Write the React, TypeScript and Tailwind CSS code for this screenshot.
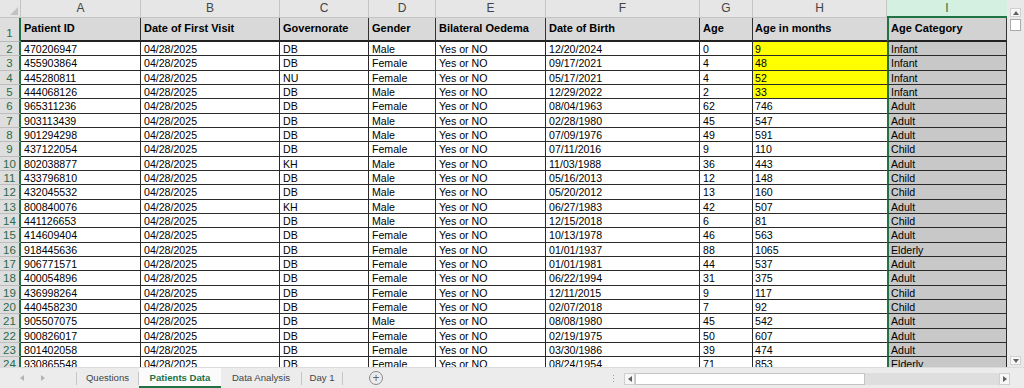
const COLS = ['A', 'B', 'C', 'D', 'E', 'F', 'G', 'H', 'I']
const HEAD = ['Patient ID', 'Date of First Visit', 'Governorate', 'Gender', 'Bilateral Oedema', 'Date of Birth', 'Age', 'Age in months', 'Age Category']

const DATA: string[][] = [
  ['470206947', 'DB', 'Male', '12/20/2024', '0', '9', 'Infant'],
  ['455903864', 'DB', 'Female', '09/17/2021', '4', '48', 'Infant'],
  ['445280811', 'NU', 'Female', '05/17/2021', '4', '52', 'Infant'],
  ['444068126', 'DB', 'Male', '12/29/2022', '2', '33', 'Infant'],
  ['965311236', 'DB', 'Female', '08/04/1963', '62', '746', 'Adult'],
  ['903113439', 'DB', 'Male', '02/28/1980', '45', '547', 'Adult'],
  ['901294298', 'DB', 'Male', '07/09/1976', '49', '591', 'Adult'],
  ['437122054', 'DB', 'Female', '07/11/2016', '9', '110', 'Child'],
  ['802038877', 'KH', 'Male', '11/03/1988', '36', '443', 'Adult'],
  ['433796810', 'DB', 'Male', '05/16/2013', '12', '148', 'Child'],
  ['432045532', 'DB', 'Male', '05/20/2012', '13', '160', 'Child'],
  ['800840076', 'KH', 'Male', '06/27/1983', '42', '507', 'Adult'],
  ['441126653', 'DB', 'Male', '12/15/2018', '6', '81', 'Child'],
  ['414609404', 'DB', 'Female', '10/13/1978', '46', '563', 'Adult'],
  ['918445636', 'DB', 'Female', '01/01/1937', '88', '1065', 'Elderly'],
  ['906771571', 'DB', 'Female', '01/01/1981', '44', '537', 'Adult'],
  ['400054896', 'DB', 'Female', '06/22/1994', '31', '375', 'Adult'],
  ['436998264', 'DB', 'Female', '12/11/2015', '9', '117', 'Child'],
  ['440458230', 'DB', 'Female', '02/07/2018', '7', '92', 'Child'],
  ['905507075', 'DB', 'Male', '08/08/1980', '45', '542', 'Adult'],
  ['900826017', 'DB', 'Female', '02/19/1975', '50', '607', 'Adult'],
  ['801402058', 'DB', 'Female', '03/30/1986', '39', '474', 'Adult'],
  ['930865548', 'DB', 'Female', '08/24/1954', '71', '853', 'Elderly'],
]

function Tri({ dir, className }: { dir: 'up' | 'down' | 'left' | 'right'; className?: string }) {
  const pts = {
    up: '0,4 3,0 6,4',
    down: '0,0 6,0 3,4',
    left: '4,0 4,6 0,3',
    right: '0,0 0,6 4,3',
  }[dir]
  const w = dir === 'up' || dir === 'down' ? 6 : 4
  const h = dir === 'up' || dir === 'down' ? 4 : 6
  return (
    <svg width={w} height={h} viewBox={`0 0 ${w} ${h}`} className={className}>
      <polygon points={pts} fill="currentColor" />
    </svg>
  )
}

function Grid() {
  return (
    <div className="w-[1007px] h-full overflow-hidden grid grid-cols-[21px_120px_139px_89px_67px_110px_154px_53px_134px_120px] grid-rows-[18px_24px] auto-rows-[14.33px] content-start bg-white">
      {/* column letters */}
      <div className="bg-[#e6e6e6] border-b border-r border-[#c4c4c4] flex items-end justify-end pr-[2px] pb-[2px]">
        <svg width="8" height="8" viewBox="0 0 8 8">
          <polygon points="8,0 8,8 0,8" fill="#c2c2c2" />
        </svg>
      </div>
      {COLS.map((c) =>
        c === 'I' ? (
          <div key={c} className="bg-[#d3f0e0] border-b-2 border-[#217346] text-[#217346] text-center text-[12px] leading-[17px]">
            {c}
          </div>
        ) : (
          <div key={c} className="bg-[#e6e6e6] border-b border-r border-[#c4c4c4] text-[#444] text-center text-[12px] leading-[17px]">
            {c}
          </div>
        ),
      )}

      {/* row 1 header */}
      <div className="bg-[#dedede] border-b border-[#b9b9b9] border-r-2 border-r-[#217346] flex items-end justify-center text-[11.5px] leading-[14px] text-[#2b6a4a] pb-[1px]">
        1
      </div>
      {HEAD.map((h, i) => (
        <div
          key={h}
          className={
            i === 8
              ? 'bg-[#d2d2d2] border-l-2 border-l-[#217346] border-r border-r-[#333] border-b-2 border-b-[#222] font-bold text-[11px] leading-[13px] pl-[2px] pt-[4px] text-black'
              : i === 7
                ? 'bg-[#d9d9d9] border-b-2 border-b-[#222] font-bold text-[11px] leading-[13px] pl-[2px] pt-[4px] text-black'
                : 'bg-[#d9d9d9] border-r border-r-[#333] border-b-2 border-b-[#222] font-bold text-[11px] leading-[13px] pl-[3px] pt-[4px] text-black'
          }
        >
          {h}
        </div>
      ))}

      {DATA.map((r, ri) => {
        const cells = [r[0], '04/28/2025', r[1], r[2], 'Yes or NO', r[3], r[4], r[5], r[6]]
        return [
          <div
            key={`h${ri}`}
            className="bg-[#dedede] border-b border-[#bdbdbd] border-r-2 border-r-[#217346] text-center text-[11.5px] leading-[14px] text-[#2b6a4a]"
          >
            {ri + 2}
          </div>,
          ...cells.map((v, ci) => {
            let cls = 'bg-white border-r border-b border-[#2a2a2a] pl-[3px]'
            if (ci === 7) cls = (ri < 4 ? 'bg-[#ffff00]' : 'bg-white') + ' border-b border-[#2a2a2a] pl-[2px]'
            if (ci === 8) cls = 'bg-[#c8c8c8] border-l-2 border-l-[#217346] border-r border-b border-[#2a2a2a] pl-[2px]'
            return (
              <div key={`${ri}-${ci}`} className={`${cls} text-[10.6px] leading-[14px] text-black whitespace-nowrap overflow-hidden`}>
                {v}
              </div>
            )
          }),
        ]
      })}
    </div>
  )
}

function VScroll() {
  return (
    <div className="w-[17px] h-full bg-[#e9e9e9] flex flex-col items-center pt-[8px] pb-[1px]">
      <div className="w-[11px] h-[9px] bg-[#f7f7f7] border border-[#d0d0d0] flex items-center justify-center text-[#606060]">
        <Tri dir="up" />
      </div>
      <div className="mt-[2px] w-[11px] h-[12px] bg-white border border-[#ababab]" />
      <div className="flex-1" />
      <div className="w-[11px] h-[9px] bg-[#f7f7f7] border border-[#d0d0d0] flex items-center justify-center text-[#606060] mb-[1px]">
        <Tri dir="down" />
      </div>
    </div>
  )
}

function Sep() {
  return <div className="w-px h-[13px] self-center bg-[#c6c6c6]" />
}

function TabBar() {
  return (
    <div className="h-[21px] flex bg-[#ececec] border-t border-[#dcdcdc] text-[9.6px] text-[#444]">
      <div className="w-[76px] flex items-center text-[#b4b4b4]">
        <Tri dir="left" className="ml-[20px]" />
        <Tri dir="right" className="ml-[17px]" />
      </div>
      <Sep />
      <div className="w-[61px] flex items-center justify-center">Questions</div>
      <Sep />
      <div className="w-[82px] flex items-center justify-center bg-[#fbfbfb] border-b-2 border-[#217346] font-bold text-[#217346] pt-[2px]">
        Patients Data
      </div>
      <div className="w-[80px] flex items-center justify-center">Data Analysis</div>
      <Sep />
      <div className="w-[40px] flex items-center justify-center">Day 1</div>
      <Sep />
      <div className="w-[26px]" />
      <div className="w-[14px] h-[14px] self-center rounded-full border border-[#8a8a8a] flex items-center justify-center text-[#666] text-[12px] leading-none">
        +
      </div>
      <div className="flex-1" />
      <div className="flex flex-col justify-center gap-[2px] mr-[10px]">
        <div className="w-[1px] h-[1px] bg-[#a0a0a0]" />
        <div className="w-[1px] h-[1px] bg-[#a0a0a0]" />
        <div className="w-[1px] h-[1px] bg-[#a0a0a0]" />
      </div>
      <div className="w-[386px] h-[12px] self-center flex bg-[#dedede] mt-[1px]">
        <div className="w-[11px] h-full bg-[#f7f7f7] border border-[#d0d0d0] flex items-center justify-center text-[#606060]">
          <Tri dir="left" />
        </div>
        <div className="w-[230px] h-full bg-white border border-[#c4c4c4]" />
        <div className="flex-1" />
        <div className="w-[11px] h-full bg-[#f7f7f7] border border-[#d0d0d0] flex items-center justify-center text-[#606060]">
          <Tri dir="right" />
        </div>
      </div>
      <div className="w-[14px]" />
    </div>
  )
}

export default function App() {
  return (
    <div className="w-[1024px] h-[388px] flex flex-col bg-[#e6e6e6] overflow-hidden font-['Liberation_Sans',Arial,sans-serif]">
      <div className="flex h-[367px]">
        <Grid />
        <VScroll />
      </div>
      <TabBar />
    </div>
  )
}
